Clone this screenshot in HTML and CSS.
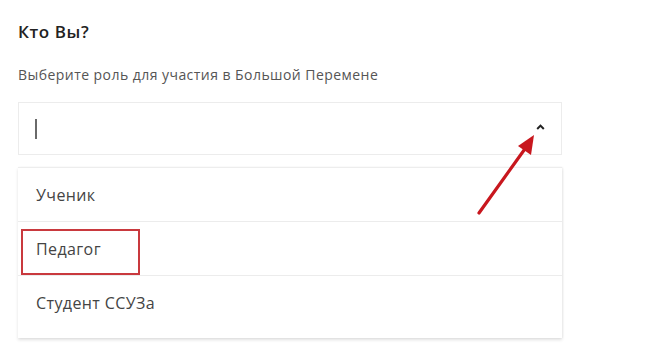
FILE: index.html
```html
<!DOCTYPE html>
<html lang="ru">
<head>
<meta charset="utf-8">
<link rel="stylesheet" href="styles.css">
</head>
<body>
<div class="page">
  <h2 class="title">Кто Вы?</h2>
  <p class="subtitle">Выберите роль для участия в Большой Перемене</p>
  <div class="select">
    <span class="cursor"></span>
    <svg class="chevron" width="9" height="6" viewBox="0 0 9 6"><path d="M1.2 5 L4.5 1.6 L7.8 5" fill="none" stroke="#222" stroke-width="2"/></svg>
  </div>
  <ul class="menu">
    <li class="item">Ученик</li>
    <li class="item">Педагог</li>
    <li class="item last">Студент ССУЗа</li>
  </ul>
  <div class="highlight"></div>
  <svg class="arrow" width="650" height="363" viewBox="0 0 650 363">
    <line x1="479" y1="213" x2="527" y2="146" stroke="#c8171e" stroke-width="3.2" stroke-linecap="round"/>
    <polygon points="534,135 531,155 518,146" fill="#c8171e"/>
  </svg>
</div>
</body>
</html>
```
FILE: styles.css
```css
html, body {
  margin: 0;
  padding: 0;
  background: #ffffff;
}
.page {
  position: relative;
  width: 650px;
  height: 363px;
  padding: 0 88px 0 18px;
  box-sizing: border-box;
  font-family: "Open Sans", "Liberation Sans", sans-serif;
  overflow: hidden;
}
.title {
  margin: 0;
  padding-top: 20px;
  font-size: 17px;
  line-height: 24px;
  font-weight: 600;
  letter-spacing: 0.6px;
  color: #222222;
}
.subtitle {
  margin: 21px 0 0 0;
  font-size: 14px;
  line-height: 20px;
  letter-spacing: 0.45px;
  color: #555555;
}
.select {
  margin-top: 17px;
  height: 51px;
  border: 1px solid #ececec;
  display: flex;
  align-items: center;
  justify-content: space-between;
  padding: 0 16px 0 16px;
}
.cursor {
  display: block;
  width: 2px;
  height: 20px;
  background: #6a6a6a;
}
.chevron {
  display: block;
  margin-top: -3px;
}
.menu {
  list-style: none;
  margin: 12px 0 0 0;
  padding: 0;
  border-top: 1px solid #ededed;
  box-shadow: 0 2px 3px rgba(0,0,0,0.12), 1px 0 2px rgba(0,0,0,0.05);
}
.item {
  height: 53px;
  border-bottom: 1px solid #ececec;
  display: flex;
  align-items: center;
  padding-left: 18px;
  font-size: 16px;
  letter-spacing: 0.4px;
  color: #444444;
}
.item.last {
  border-bottom: none;
  align-items: flex-start;
  padding-top: 16px;
  box-sizing: border-box;
  height: 62px;
}
.highlight {
  position: absolute;
  left: 21px;
  top: 229px;
  width: 115px;
  height: 42px;
  border: 2px solid #c9393e;
}
.arrow {
  position: absolute;
  left: 0;
  top: 0;
}
```
